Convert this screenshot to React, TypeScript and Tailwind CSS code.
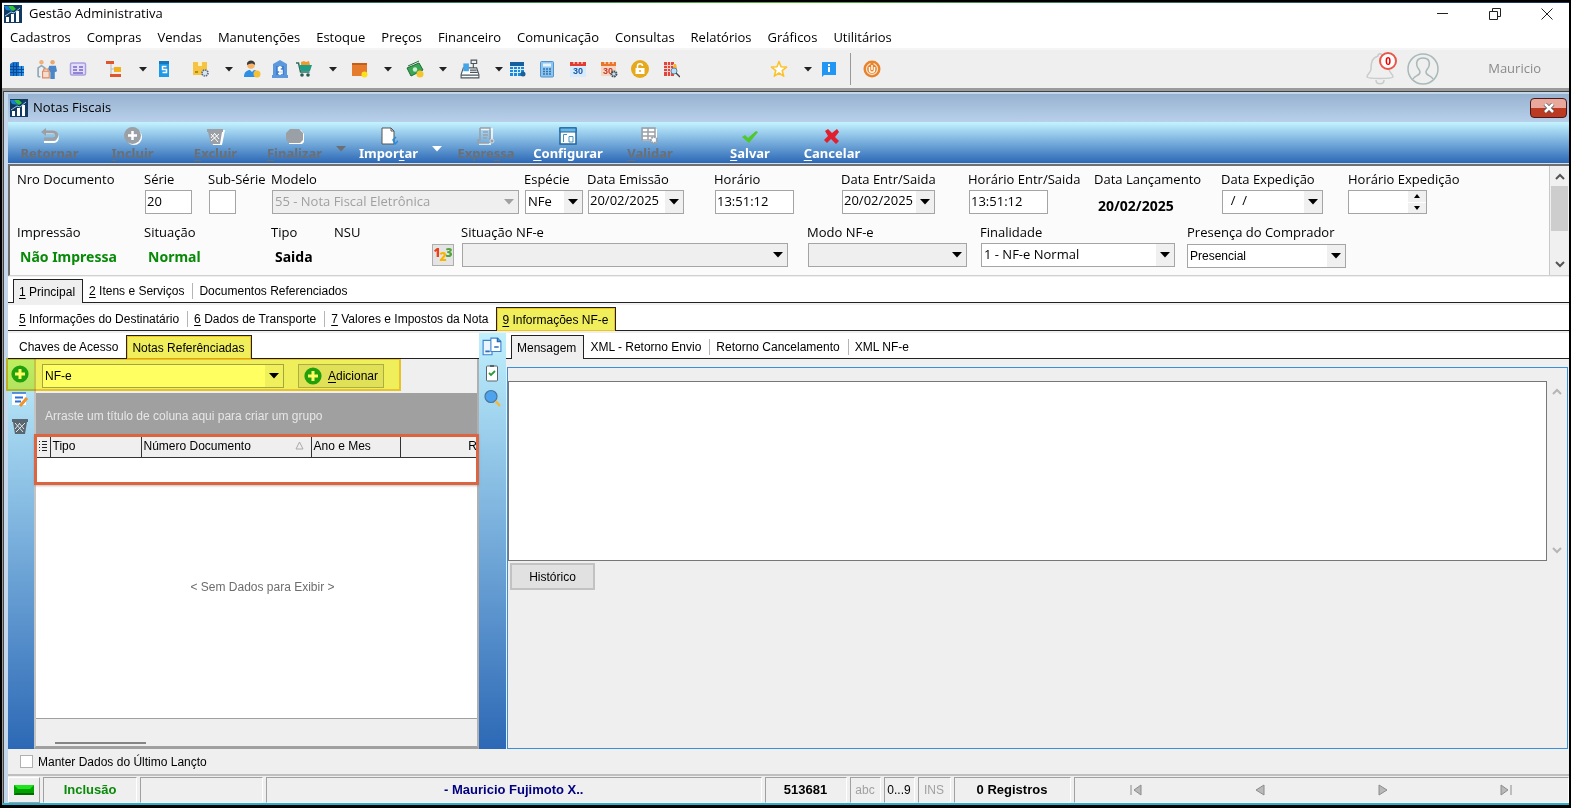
import type { ReactNode } from "react";
import { clsx } from "clsx";

const ui = "font-['Open_Sans','Noto_Sans',sans-serif] text-[13px]";
const sans = "font-['Liberation_Sans',Arial,sans-serif] text-[12px]";
const strong = "font-['Noto_Sans',sans-serif] font-bold";

function Icon({ size = 18, children, className }: { size?: number; children: ReactNode; className?: string }) {
  return (
    <svg width={size} height={size} viewBox="0 0 18 18" fill="none" className={clsx("shrink-0", className)} aria-hidden="true">
      {children}
    </svg>
  );
}

function Arrow({ className = "text-black" }: { className?: string }) {
  return (
    <svg width="10" height="6" viewBox="0 0 10 6" className={clsx("shrink-0", className)} aria-hidden="true">
      <path d="M0 0h10L5 5.5z" fill="currentColor" />
    </svg>
  );
}

function SmallArrow() {
  return (
    <svg width="8" height="5" viewBox="0 0 8 5" className="shrink-0" aria-hidden="true">
      <path d="M0 0h8L4 4.500z" fill="#222" />
    </svg>
  );
}

function AppIcon() {
  return (
    <Icon>
      <path fill="#12395f" d="M0 0h18v18H0z" />
      <path fill="#2fc23a" d="M4 1h5l3 3-3 2-3-2z" />
      <path fill="#1b7fd1" d="M0 1l4 0 2 3 3 2-7-1z" />
      <path fill="#fff" d="M2 12h3v5H2zM7 9h3v8H7zM12 6h3v11h-3z" />
      <path stroke="#9cc7e6" d="M1 11l6-4 3 1 6-5" />
    </Icon>
  );
}

function PlusIcon() {
  return (
    <Icon>
      <circle cx="9" cy="9" r="8.6" fill="#1fa01f" />
      <path stroke="#fff" strokeWidth="3" d="M9 4v10M4 9h10" />
    </Icon>
  );
}

/* ---------- main toolbar icons ---------- */

const icons: Record<string, ReactNode> = {
  Empresas: (
    <Icon>
      <path fill="#1976d2" d="M2 4l3-2h6v14H2z" />
      <path fill="#2f96ee" d="M11 6h5v10h-5z" />
      <path stroke="#0d4a94" d="M2 6.500h9M2 9.500h14M2 12.500h14M5.500 3v13M8.500 3v13M13.500 6v10" />
    </Icon>
  ),
  Pessoas: (
    <Icon size={20}>
      <circle cx="4" cy="3" r="2" fill="#f0b07a" />
      <circle cx="14" cy="3" r="2" fill="#e9a86f" />
      <path stroke="#8ba9bd" strokeWidth="1.5" d="M1 16V8l3-2 3 2v2M1 16h2" />
      <path fill="#4c86c6" d="M11 6h6l1 5-2 1v6h-4v-6l-2-3z" />
      <path stroke="#d98b65" d="M5 11h6v6H5zM6 11V9h4v2" fill="#f6dccd" />
    </Icon>
  ),
  Cartões: (
    <Icon>
      <rect x="1.5" y="3" width="15" height="12" rx="1.5" fill="#e3dff8" stroke="#a99fe0" strokeWidth="1.5" />
      <path stroke="#7568c9" strokeWidth="1.5" d="M4 7h4M4 10h4M10 7h4M10 10h4M4 13h10" />
    </Icon>
  ),
  Estrutura: (
    <Icon>
      <path fill="#e0552b" d="M1 1h8v3H1zM5 14h11v3H5z" />
      <path fill="#f2b01e" d="M9 7h7v5H9z" />
      <path stroke="#b9b9b9" d="M6 4v10M6 9h3" />
    </Icon>
  ),
  Documento: (
    <Icon>
      <path fill="#1b9ae8" d="M4 1h10v16H4z" />
      <path fill="#1477bd" d="M4 1h10v3H4z" />
      <path stroke="#fff" strokeWidth="1.5" d="M11.500 6.500h-4v3h4v3h-4" />
    </Icon>
  ),
  Produtos: (
    <Icon>
      <path fill="#f6c443" d="M1 2h14v13H1z" />
      <path fill="#fff1bf" d="M6 2h4v4H6z" />
      <path stroke="#b88711" d="M3 12h3" strokeWidth="2" />
      <circle cx="13" cy="13" r="3" fill="#dbe3ee" stroke="#526a8a" strokeWidth="1.6" strokeDasharray="1.5 .8" />
    </Icon>
  ),
  Cliente: (
    <Icon>
      <circle cx="8" cy="5" r="3.800" fill="#f7b267" />
      <path fill="#3a3a3a" d="M4 5c-1-6 9-6 8 0-2-2-5-2-8 0z" />
      <path fill="#2d8fe5" d="M1 17c0-5 3-7 6-7l2 2 2-2c3 0 4 3 4 7z" />
      <circle cx="14" cy="14" r="3.500" fill="#f6c035" />
    </Icon>
  ),
  Banco: (
    <Icon>
      <path fill="#5b98dd" d="M9 0l7 4v2H2V4zM2 6h3v9H2zM13 6h3v9h-3zM1 15h16v3H1z" />
      <path fill="#3f7fcb" d="M5 6h8v9H5z" />
      <path stroke="#fff" strokeWidth="1.500" d="M11 7.500H7.500v3H11v3H7M9 6v9" />
    </Icon>
  ),
  Vendas: (
    <Icon>
      <path stroke="#2c6e62" strokeWidth="1.500" d="M1 3h2.500l2 9h9" />
      <path fill="#1f9d85" d="M4 5h13l-2 6H6z" />
      <path fill="#f19a2b" d="M6 2l3-1 2 1 3-1 1 4H6z" />
      <circle cx="7" cy="15" r="1.800" fill="#285a54" />
      <circle cx="13" cy="15" r="1.800" fill="#285a54" />
    </Icon>
  ),
  Compras: (
    <Icon>
      <path fill="#e57c2d" d="M2 3h15v13H2z" />
      <path fill="#c75e17" d="M2 3h15v2H2z" />
      <circle cx="14.500" cy="14.500" r="3" fill="#fbe116" />
    </Icon>
  ),
  Caixa: (
    <Icon>
      <path fill="#3aa655" d="M1 8l12-5 4 7-12 6z" />
      <path stroke="#1e6e35" d="M1 8l12-5 4 7-12 6zM2 6l11-5" />
      <circle cx="9" cy="9.500" r="2.200" fill="#c9efd0" />
      <circle cx="14" cy="14" r="3.500" fill="#f4c52f" />
    </Icon>
  ),
  "Frente de caixa": (
    <Icon size={20}>
      <path fill="#fff" stroke="#4a545f" d="M3 8h12l2 6v3H1v-3z" />
      <path fill="#42a5e8" d="M3 4h5v7H3z" />
      <path stroke="#4a545f" d="M10 1h5v3h-5zM12 4v4M9 10h6M9 12h7M1 14.500h16" />
    </Icon>
  ),
  Agenda: (
    <Icon>
      <path fill="#1e88d8" d="M2 2h14v14H2z" />
      <path fill="#15609f" d="M2 2h14v4H2z" />
      <path stroke="#d6ecfb" d="M2 6.500h14M2 9.500h14M2 12.500h11M5.500 6v10M9.500 6v10M12.500 6v7" />
      <circle cx="15" cy="14" r="2.500" fill="#1e5f94" />
    </Icon>
  ),
  Calculadora: (
    <Icon>
      <rect x="2.500" y="1.500" width="13" height="15.500" rx="1" fill="#8ec4ee" stroke="#4e94cf" />
      <path fill="#e6f4ff" d="M5 3.500h8v3H5z" />
      <path stroke="#2f74ad" strokeDasharray="2 1" d="M5 9h8M5 11.500h8M5 14h8" strokeWidth="1.500" />
    </Icon>
  ),
  Calendário: (
    <Icon>
      <path fill="#d6ebfb" d="M1 3h16v14H1z" />
      <path fill="#e03c31" d="M1 2h16v4H1z" />
      <path stroke="#fff" d="M5 1v3M9 1v3M13 1v3" />
      <text x="4" y="14" fontSize="9" fontWeight="bold" fill="#1a56a8" fontFamily="Liberation Sans">30</text>
    </Icon>
  ),
  Programação: (
    <Icon>
      <path fill="#f5d7c4" d="M1 3h15v13H1z" />
      <path fill="#e8772e" d="M1 2h15v4H1z" />
      <path stroke="#fff" d="M5 1v3M9 1v3M13 1v3" />
      <text x="3" y="14" fontSize="9" fontWeight="bold" fill="#c73a2a" fontFamily="Liberation Sans">30</text>
      <circle cx="14" cy="14" r="2.500" fill="#cfdbe0" stroke="#3b5560" strokeWidth="2" strokeDasharray="1.600 .6" />
    </Icon>
  ),
  Bloquear: (
    <Icon>
      <circle cx="9" cy="9" r="9" fill="#e6a91c" />
      <path fill="#fff" d="M4.500 8h9v6h-9z" />
      <path stroke="#fff" strokeWidth="1.500" d="M6.500 8V6c0-3 5-3 5 0" />
      <path stroke="#e6a91c" strokeWidth="1.500" d="M9 10v2" />
    </Icon>
  ),
  Consulta: (
    <Icon>
      <path fill="#e0453c" d="M2 2h10v14H2z" />
      <path fill="#f2b632" d="M11 4h3l1 4v4h-4z" />
      <path stroke="#fbd0cc" d="M2 5.500h10M2 8.500h10M2 11.500h8M5.500 2v14M8.500 2v14" />
      <circle cx="12" cy="11" r="3" fill="#b9def7" stroke="#5b88a8" />
      <path stroke="#444" strokeWidth="1.500" d="M14 13l4 4" />
    </Icon>
  ),
  Favoritos: (
    <Icon>
      <path fill="#fff" stroke="#fbc22d" strokeWidth="1.600" strokeLinejoin="round" d="M9 1.500l2 5.300 5.500.3-4.300 3.500 1.500 5.600L9 13l-4.700 3.200 1.500-5.600L1.500 7.100 7 6.800z" />
    </Icon>
  ),
  Informações: (
    <Icon>
      <path fill="#2196f3" d="M2 2h14v13H4l-2 2z" />
      <path stroke="#fff" strokeWidth="2" d="M9 4v2M9 7v5" />
    </Icon>
  ),
  Sair: (
    <Icon>
      <circle cx="9" cy="9" r="8.500" fill="#e8822b" />
      <circle cx="9" cy="9" r="5.500" stroke="#fbe3cb" strokeWidth="1.300" />
      <path stroke="#e8822b" strokeWidth="3" d="M9 2v5" />
      <path stroke="#fff" strokeWidth="1.500" d="M9 5v5M6.500 7v3c0 3 5 3 5 0V7" />
    </Icon>
  ),
};

const toolbar: { name: string; box: string; menu?: string }[] = [
  { name: "Empresas", box: "w-[29px]" },
  { name: "Pessoas", box: "w-[31px]" },
  { name: "Cartões", box: "w-8" },
  { name: "Estrutura", box: "w-10", menu: "" },
  { name: "Documento", box: "w-6" },
  { name: "Produtos", box: "w-[38px] ml-[6px]", menu: "" },
  { name: "Cliente", box: "w-7" },
  { name: "Banco", box: "w-7" },
  { name: "Vendas", box: "w-5", menu: "ml-[10px]" },
  { name: "Compras", box: "w-[34px]", menu: "ml-[3px]" },
  { name: "Caixa", box: "w-9", menu: "ml-[1px]" },
  { name: "Frente de caixa", box: "w-9", menu: "ml-[2px]" },
  { name: "Agenda", box: "w-[18px]" },
  { name: "Calculadora", box: "w-[30px] ml-[6px]" },
  { name: "Calendário", box: "w-8" },
  { name: "Programação", box: "w-[30px]" },
  { name: "Bloquear", box: "w-8" },
  { name: "Consulta", box: "w-[30px]" },
  { name: "Favoritos", box: "w-[30px] ml-[78px]", menu: "ml-[5px]" },
  { name: "Informações", box: "w-6" },
];

const menus = [
  "Cadastros", "Compras", "Vendas", "Manutenções", "Estoque", "Preços",
  "Financeiro", "Comunicação", "Consultas", "Relatórios", "Gráficos", "Utilitários",
];

function ToolButton({ name, box }: { name: string; box: string }) {
  return (
    <button aria-label={name} className={clsx("flex h-6 shrink-0 items-center justify-center", box)}>
      {icons[name]}
    </button>
  );
}

function TopBar() {
  return (
    <header className={clsx(ui, "bg-white text-black")}>
      <div className="h-px bg-linear-to-r from-[#1d3f66] via-[#5fa83f] to-[#1d3060]" />
      <div className="flex h-[21px] items-center justify-between pl-[2px] pr-4">
        <div className="flex items-center gap-[7px]">
          <AppIcon />
          <h1>Gestão Administrativa</h1>
        </div>
        <div className="flex items-center gap-10">
          <button aria-label="Minimizar">
            <svg width="12" height="12"><path d="M0 5.500h11" stroke="#222" /></svg>
          </button>
          <button aria-label="Restaurar">
            <svg width="12" height="12" fill="none" stroke="#222"><path d="M.5 3.500h8v8h-8zM3.500 3.500v-3h8v8h-3" /></svg>
          </button>
          <button aria-label="Fechar">
            <svg width="12" height="12"><path d="M.5.5l11 11M11.500.5l-11 11" stroke="#222" /></svg>
          </button>
        </div>
      </div>
      <nav className="flex h-[24px] items-center gap-4 pl-2 pt-1">
        {menus.map((m) => (
          <button key={m}>{m}</button>
        ))}
      </nav>
      <div className="flex h-[40px] items-center border-t-2 border-[#f5f5f5] bg-[#efefef]">
        {toolbar.map((t) => (
          <div key={t.name} className="flex items-center">
            <ToolButton name={t.name} box={t.box} />
            {t.menu !== undefined && (
              <button aria-label={`Mais ${t.name}`} className={clsx("flex h-6 w-[18px] items-center justify-center", t.menu)}>
                <SmallArrow />
              </button>
            )}
          </div>
        ))}
        <div className="ml-[9px] mr-[9px] h-8 w-px bg-[#999]" />
        <ToolButton name="Sair" box="w-6" />
        <div className="ml-auto flex items-center gap-[11px] pr-[28px]">
          <button aria-label="Notificações" className="relative">
            <svg width="30" height="34" viewBox="0 0 30 34" fill="none" stroke="#c9cccc" strokeWidth="1.500">
              <path d="M12 4c0-3 4-3 4 0 6 2 7 6 7 13 0 4 4 5 4 8-1 2-25 2-26 0 0-3 4-4 4-8 0-7 1-11 7-13zM10 28c0 5 8 5 8 0" />
            </svg>
            <span className="absolute left-[13px] top-0 flex h-[18px] w-[18px] items-center justify-center rounded-full border-2 border-[#ea5648] bg-white text-[10px] font-bold text-[#f00000]">
              0
            </span>
          </button>
          <button aria-label="Usuário">
            <svg width="32" height="32" viewBox="0 0 32 32" fill="none" stroke="#a9b8b8" strokeWidth="1.500">
              <circle cx="16" cy="16" r="15" />
              <path d="M16 5c-6 0-7 4-6 8 1 3 3 4 3 6 0 4-5 3-7 7M16 5c6 0 7 4 6 8-1 3-3 4-3 6 0 4 5 3 7 7" />
            </svg>
          </button>
          <span className="ml-[38px] text-[#8a8a8a]">Mauricio</span>
        </div>
      </div>
    </header>
  );
}

/* ---------- note window toolbar ---------- */

const actionIcons: Record<string, ReactNode> = {
  Retornar: (
    <Icon>
      <path stroke="#fff" strokeWidth="2" d="M4 6h9c5 0 5 9 0 9H3" />
      <path stroke="#9aa0a6" strokeWidth="3" d="M4 5h8c5 0 5 7 0 7H3" />
      <path fill="#9aa0a6" d="M0 5l5-4v8z" />
    </Icon>
  ),
  Incluir: (
    <Icon>
      <circle cx="10" cy="10" r="8" fill="#fff" />
      <circle cx="8.500" cy="8.500" r="8.500" fill="#9aa0a6" />
      <path stroke="#fff" strokeWidth="2.500" d="M8.500 4v9M4 8.500h9" />
    </Icon>
  ),
  Excluir: (
    <Icon>
      <path fill="#fff" d="M2 3h16l-3 15H6z" />
      <path fill="#9aa0a6" d="M0 2h16v3h-1l-2 12H4L1 5H0z" />
      <path stroke="#fff" d="M4 7l7 8M8 7l4 5M12 7l-8 7M8 6l-4 5" />
    </Icon>
  ),
  Finalizar: (
    <Icon>
      <path fill="#fff" d="M5 3h10l3 4v8l-2 2H3z" />
      <path fill="#9aa0a6" d="M4 2h9l4 4v7l-3 3H3l-3-3V6z" />
    </Icon>
  ),
  Importar: (
    <Icon>
      <path fill="#fff" stroke="#555" d="M2 1h9l3 3v13H2z" />
      <path stroke="#555" d="M11 1v3h3" />
      <path stroke="#2a8ad8" strokeWidth="1.500" d="M16 10l-3 3 2 4 3-3" />
    </Icon>
  ),
  Expressa: (
    <Icon>
      <path stroke="#fff" strokeWidth="1.500" d="M4 2h11v12M2 17h12" />
      <path stroke="#9aa0a6" strokeWidth="1.500" d="M3 1h10v12M3 1v12H1v3h11M6 5h5M6 8h5M6 11h4" />
      <circle cx="15" cy="14" r="2" stroke="#d5dade" fill="#9aa0a6" />
    </Icon>
  ),
  Configurar: (
    <Icon>
      <path fill="#fff" stroke="#1b669e" strokeWidth="1.500" d="M1 1h16v16H1z" />
      <path fill="#6cb6e6" stroke="#1b669e" d="M1 1h16v4H1z" />
      <path stroke="#4a90bd" d="M4.500 15V7.500H8M10 15V9.500h4V15h-4" />
    </Icon>
  ),
  Validar: (
    <Icon>
      <path fill="#fff" d="M2 2h14v12H2z" />
      <path stroke="#9aa0a6" strokeWidth="1.500" d="M1 1h13v12H1zM1 5h13M1 9h13M7 1v12" />
      <circle cx="13" cy="13" r="3" fill="#fff" stroke="#9aa0a6" strokeWidth="2" strokeDasharray="2 .7" />
    </Icon>
  ),
  Salvar: (
    <Icon>
      <path fill="#4fc928" d="M1 10l3-2 3 3 8-7 2 1-9 11z" />
    </Icon>
  ),
  Cancelar: (
    <Icon>
      <path fill="#e0202f" d="M2 4l3-2 4 4 5-4 2 3-4 5 4 4-3 3-5-5-4 4-3-3 4-4z" />
    </Icon>
  ),
};

// hot is the position of the shortcut letter inside the label
const actions: { label: string; hot: number; off?: boolean; box: string; menu?: boolean }[] = [
  { label: "Retornar", hot: -1, off: true, box: "w-[83px]" },
  { label: "Incluir", hot: 0, off: true, box: "w-[83px]" },
  { label: "Excluir", hot: 0, off: true, box: "w-[83px]" },
  { label: "Finalizar", hot: 0, off: true, box: "w-[75px]", menu: true },
  { label: "Importar", hot: 5, box: "w-[79px]", menu: true },
  { label: "Expressa", hot: 5, off: true, box: "w-[82px]" },
  { label: "Configurar", hot: 0, box: "w-[82px]" },
  { label: "Validar", hot: 0, off: true, box: "w-[82px]" },
  { label: "Salvar", hot: 0, box: "ml-[18px] w-[82px]" },
  { label: "Cancelar", hot: 0, box: "w-[82px]" },
];

function HotLabel({ text, hot }: { text: string; hot: number }) {
  if (hot < 0) return <span>{text}</span>;
  return (
    <span className="whitespace-pre">
      {text.slice(0, hot)}
      <u className="underline-offset-2">{text[hot]}</u>
      {text.slice(hot + 1)}
    </span>
  );
}

function ActionBar() {
  return (
    <div className="flex h-[41px] items-stretch bg-linear-to-b from-[#c5f3ff] to-[#2c68b5]">
      {actions.map((a) => (
        <div key={a.label} className="flex">
          <button
            disabled={a.off}
            className={clsx(strong, "flex flex-col items-center pt-[5px] text-[13px] leading-[17px]", a.box, a.off ? "text-[#6b7075]" : "text-white")}
          >
            {actionIcons[a.label]}
            <HotLabel text={a.label} hot={a.hot} />
          </button>
          {a.menu && (
            <button aria-label={`Opções de ${a.label}`} disabled={a.off} className="flex w-[17px] items-center justify-center pt-3">
              <Arrow className={a.off ? "text-[#6b7075]" : "text-white"} />
            </button>
          )}
        </div>
      ))}
    </div>
  );
}

/* ---------- header form ---------- */

const box = "h-6 border border-[#a5a5a5] bg-white";

function Field({ label, id, cell, children }: { label: string; id?: string; cell: string; children?: ReactNode }) {
  return (
    <div className={clsx("flex shrink-0 flex-col gap-[3px] whitespace-nowrap", cell)}>
      {id ? (
        <label htmlFor={id} className="h-4 leading-4">{label}</label>
      ) : (
        <span className="h-4 leading-4">{label}</span>
      )}
      {children}
    </div>
  );
}

function TextBox({ id, value = "", width }: { id: string; value?: string; width: string }) {
  return <input id={id} defaultValue={value} className={clsx(box, "ml-px pb-[2px] pl-[1px]", width)} />;
}

function Select({ id, label, value = "", width, tone, className }: { id: string; label?: string; value?: string; width: string; tone?: "off" | "empty"; className?: string }) {
  return (
    <div className={clsx("relative", width)}>
      <select
        id={id}
        aria-label={label}
        disabled={tone === "off"}
        className={clsx(
          "h-6 w-full appearance-none border border-[#a5a5a5] pl-[2px] pr-5",
          tone ? "bg-[#efefef]" : "bg-white",
          tone === "off" && "text-[#a0a0a0] opacity-100",
          className,
        )}
      >
        <option>{value}</option>
      </select>
      <span className={clsx("pointer-events-none absolute inset-y-px right-px flex w-[18px] items-center justify-center", !tone && "bg-[#f0f0f0]")}>
        <Arrow className={tone === "off" ? "text-[#a0a0a0]" : "text-black"} />
      </span>
    </div>
  );
}

function DateBox({ id, value, width }: { id: string; value: string; width: string }) {
  return (
    <div className={clsx(box, "ml-px flex", width)}>
      <input id={id} defaultValue={value} className="w-0 flex-1 pb-[2px] pl-[1px]" />
      <button aria-label="Abrir calendário" className="flex w-[18px] shrink-0 items-center justify-center bg-[#f0f0f0]">
        <Arrow />
      </button>
    </div>
  );
}

function HeaderForm() {
  return (
    <section className="flex h-[112px] border-2 border-b border-r-0 border-[#6f6f6f] border-b-[#d0d0d0] bg-[#fbfbfb]">
      <div className="min-w-0 flex-1 overflow-hidden pl-[7px] pt-[5px]">
        <div className="flex h-[43px]">
          <Field label="Nro Documento" cell="w-[127px]" />
          <Field label="Série" id="serie" cell="w-16">
            <TextBox id="serie" value="20" width="w-[47px]" />
          </Field>
          <Field label="Sub-Série" id="subserie" cell="w-[63px]">
            <TextBox id="subserie" width="w-[27px]" />
          </Field>
          <Field label="Modelo" id="modelo" cell="w-[253px]">
            <Select id="modelo" value="55 - Nota Fiscal Eletrônica" width="ml-px w-[247px]" tone="off" />
          </Field>
          <Field label="Espécie" id="especie" cell="w-[63px]">
            <Select id="especie" value="NFe" width="ml-px w-[58px]" />
          </Field>
          <Field label="Data Emissão" id="emissao" cell="w-[127px]">
            <DateBox id="emissao" value="20/02/2025" width="w-[96px]" />
          </Field>
          <Field label="Horário" id="horario" cell="w-[127px]">
            <TextBox id="horario" value="13:51:12" width="w-[79px]" />
          </Field>
          <Field label="Data Entr/Saida" id="entrada" cell="w-[127px]">
            <DateBox id="entrada" value="20/02/2025" width="w-[93px]" />
          </Field>
          <Field label="Horário Entr/Saida" id="hentrada" cell="w-[126px]">
            <TextBox id="hentrada" value="13:51:12" width="w-[79px]" />
          </Field>
          <Field label="Data Lançamento" cell="w-[127px]">
            <span className={clsx(strong, "pl-1 pt-1 text-[14px] leading-6")}>20/02/2025</span>
          </Field>
          <Field label="Data Expedição" id="expedicao" cell="w-[127px]">
            <DateBox id="expedicao" value="  /  /" width="w-[101px]" />
          </Field>
          <Field label="Horário Expedição" id="hexpedicao" cell="w-[127px]">
            <div className={clsx(box, "flex w-[79px]")}>
              <input id="hexpedicao" className="w-0 flex-1 px-1" />
              <div className="flex w-[18px] flex-col bg-[#f0f0f0]">
                <button aria-label="Aumentar" className="flex flex-1 items-center justify-center">
                  <svg width="6" height="4"><path d="M0 4h6L3 0z" /></svg>
                </button>
                <button aria-label="Diminuir" className="flex flex-1 items-center justify-center border-t border-white">
                  <svg width="6" height="4"><path d="M0 0h6L3 4z" /></svg>
                </button>
              </div>
            </div>
          </Field>
        </div>
        <div className="mt-[10px] flex h-[45px]">
          <Field label="Impressão" cell="w-[127px]">
            <span className={clsx(strong, "ml-[3px] w-[98px] overflow-hidden text-[14px] leading-7 text-[#078a07]")}>Não Impressa</span>
          </Field>
          <Field label="Situação" cell="w-[127px]">
            <span className={clsx(strong, "pl-1 text-[14px] leading-7 text-[#078a07]")}>Normal</span>
          </Field>
          <Field label="Tipo" cell="w-[63px]">
            <span className={clsx(strong, "pl-1 text-[14px] leading-7")}>Saida</span>
          </Field>
          <Field label="NSU" cell="w-[127px]">
            <button aria-label="Numerar NSU" className="ml-[98px] mt-px flex h-[22px] w-[22px] items-center justify-center border border-[#adadad] bg-[#e4e4e4] text-[12px] font-extrabold leading-none">
              <span className="pb-1 text-[#ee3f1a]">1</span>
              <span className="-mx-px pt-1 text-[#f7b500]">2</span>
              <span className="pb-1 text-[#54a33b]">3</span>
            </button>
          </Field>
          <Field label="Situação NF-e" id="situacaonfe" cell="w-[346px]">
            <Select id="situacaonfe" width="ml-px w-[326px]" tone="empty" />
          </Field>
          <Field label="Modo NF-e" id="modonfe" cell="w-[173px]">
            <Select id="modonfe" width="ml-px w-[159px]" tone="empty" />
          </Field>
          <Field label="Finalidade" id="finalidade" cell="w-[207px]">
            <Select id="finalidade" value="1 - NF-e Normal" width="ml-px w-[194px]" />
          </Field>
          <Field label="Presença do Comprador" id="presenca" cell="w-[160px]">
            <Select id="presenca" value="Presencial" width="mt-px w-[159px]" className={sans} />
          </Field>
        </div>
      </div>
      <div className="flex w-[20px] shrink-0 flex-col items-center justify-between border-l border-[#c8c8c8] bg-[#f0f0f0] py-[7px]">
        <svg width="10" height="7" fill="none" stroke="#555" strokeWidth="2"><path d="M1 6l4-4 4 4" /></svg>
        <div className="mb-auto mt-[6px] h-[45px] w-[17px] bg-[#cdcdcd]" />
        <svg width="10" height="7" fill="none" stroke="#555" strokeWidth="2"><path d="M1 1l4 4 4-4" /></svg>
      </div>
    </section>
  );
}

/* ---------- tabs ---------- */

type Tab = { text: string; hot?: boolean };

function Tabs({ items, active, marked, pad = "pl-[5px]" }: { items: Tab[]; active: number; marked?: boolean; pad?: string }) {
  return (
    <div role="tablist" className={clsx(sans, "flex h-[26px] shrink-0 items-end border-b border-[#222] bg-white", pad)}>
      {items.map((t, i) => (
        <button
          key={t.text}
          role="tab"
          aria-selected={i === active}
          className={clsx(
            "-mb-px flex h-6 items-center whitespace-nowrap",
            i === active && "border border-b-0 border-[#222] pl-[5px] pr-[7px]",
            i === active && (marked ? "border-[#6b5a00] bg-[#f1ee5c] shadow-[inset_0_0_0_1px_#f0c419]" : "bg-[#efefef]"),
            i !== active && "pl-[6px]",
          )}
        >
          <HotLabel text={t.text} hot={t.hot ? 0 : -1} />
          {i !== active && i + 1 !== active && i < items.length - 1 && <span className="ml-[8px] h-4 w-px bg-[#b5b5b5]" />}
          {i + 1 === active && <span className="w-[8px]" />}
        </button>
      ))}
    </div>
  );
}

/* ---------- referenced notes ---------- */

function NotesPanel() {
  return (
    <div className="flex w-[471px] shrink-0 flex-col">
      <Tabs marked active={1} items={[{ text: "Chaves de Acesso" }, { text: "Notas Referênciadas" }]} />
      <div className="relative flex flex-1">
        <div className="flex w-[26px] shrink-0 flex-col items-center gap-2 bg-linear-to-b from-[#bfeefb] to-[#2c68b5] pr-[2px] pt-[6px]">
          <button aria-label="Incluir nota"><PlusIcon /></button>
          <button aria-label="Editar nota">
            <Icon>
              <path fill="#fff" d="M1 2h14v12H1z" />
              <path stroke="#2c6fd6" strokeWidth="1.500" d="M1 2h14" />
              <path stroke="#2c6fd6" strokeWidth="2" d="M4 6.500h8M4 10.500h6" />
              <path stroke="#f0932b" strokeWidth="3" d="M16 7l-7 8" />
            </Icon>
          </button>
          <button aria-label="Excluir nota">
            <Icon>
              <path fill="#5b6770" d="M1 2h16v3h-1l-2 12H4L2 5H1z" />
              <path stroke="#dfe7ec" d="M4 6l8 9M8 6l5 6M14 6l-9 9M9 6l-5 6" />
            </Icon>
          </button>
        </div>
        <div className="flex min-w-0 flex-1 flex-col border-b-[3px] border-l-2 border-r-2 border-[#a0a0a0] border-l-[#c4c4c4] border-r-[#b0b0b0]">
          <div className={clsx(sans, "flex h-[34px] items-center gap-[14px] bg-[#efefef] pl-[6px]")}>
            <Select id="tiponota" label="Tipo de nota" value="NF-e" width="w-[242px]" />
            <button className="flex h-6 w-[86px] items-center justify-center gap-[6px] border border-[#adadad] bg-[#e1e1e1]">
              <PlusIcon />
              <HotLabel text="Adicionar" hot={0} />
            </button>
          </div>
          <div className={clsx(sans, "flex h-[42px] items-center bg-[#a0a0a0] pl-[9px] pt-1 text-[#e6e6e6]")}>
            Arraste um título de coluna aqui para criar um grupo
          </div>
          <div className="relative">
            <table className={clsx(sans, "w-full table-fixed border-collapse")}>
              <colgroup>
                <col className="w-[14px]" />
                <col className="w-[91px]" />
                <col className="w-[170px]" />
                <col className="w-[89px]" />
                <col />
              </colgroup>
              <thead>
                <tr className="h-[22px] border-b border-[#333] bg-[#efefef] text-left *:border-r *:border-[#333] *:font-normal *:last:border-r-0">
                  <th>
                    <svg width="10" height="12" className="mx-auto" stroke="#222"><path d="M1 1.500h1M4 1.500h5M1 4.500h1M4 4.500h5M1 7.500h1M4 7.500h5M1 10.500h1M4 10.500h5" /></svg>
                  </th>
                  <th className="pl-[2px]">Tipo</th>
                  <th className="pl-[2px]">
                    <span className="flex items-center justify-between pr-[7px]">
                      Número Documento
                      <svg width="9" height="9" fill="none" stroke="#aaa"><path d="M1 8L4.500 1 8 8z" /></svg>
                    </span>
                  </th>
                  <th className="pl-[2px]">Ano e Mes</th>
                  <th className="text-right">R</th>
                </tr>
              </thead>
              <tbody>
                <tr className="h-[27px] bg-white">
                  <td colSpan={5} />
                </tr>
              </tbody>
            </table>
            <div className="pointer-events-none absolute -inset-x-[2px] -inset-y-px border-[3px] border-[#dc6440] shadow-[0_1px_2px_#8888]" />
          </div>
          <div className={clsx(sans, "flex flex-1 items-center justify-center bg-white pb-7 pl-3 text-[#6d6d6d]")}>
            &lt; Sem Dados para Exibir &gt;
          </div>
          <div className="flex h-[28px] flex-col justify-end border-t border-[#a0a0a0] bg-[#efefef] pb-[2px]">
            <div className="ml-[19px] h-[2px] w-[91px] bg-[#858585]" />
          </div>
        </div>
        <div className="pointer-events-none absolute -left-[2px] -top-px h-[33px] w-[395px] border-2 border-[#f7cf2a] bg-[#ffff62] mix-blend-multiply" />
      </div>
    </div>
  );
}

function MessagePanel() {
  return (
    <div className="flex min-w-0 flex-1 flex-col">
      <Tabs
        active={0}
        pad="pl-[5px]"
        items={[{ text: "Mensagem" }, { text: "XML - Retorno Envio" }, { text: "Retorno Cancelamento" }, { text: "XML NF-e" }]}
      />
      <div className="ml-px mr-px mt-2 flex flex-1 flex-col border border-[#3a8fd6] pt-[13px]">
        <div className="flex">
          <textarea aria-label="Mensagem" className="h-[180px] min-w-0 flex-1 resize-none border border-[#777] bg-white" />
          <div className="flex w-[20px] flex-col items-center justify-between py-[7px]">
            <svg width="10" height="7" fill="none" stroke="#b5b5b5" strokeWidth="2"><path d="M1 6l4-4 4 4" /></svg>
            <svg width="10" height="7" fill="none" stroke="#b5b5b5" strokeWidth="2"><path d="M1 1l4 4 4-4" /></svg>
          </div>
        </div>
        <button className={clsx(sans, "ml-[2px] mt-[2px] h-[27px] w-[85px] border-2 border-[#c2c2c2] bg-[#e1e1e1]")}>Histórico</button>
      </div>
    </div>
  );
}

function SideStrip() {
  return (
    <div className="flex w-[27px] shrink-0 flex-col items-center gap-[7px] bg-linear-to-b from-[#c0f0fc] to-[#2c68b5] pr-[2px] pt-[4px]">
      <button aria-label="Copiar">
        <Icon size={20}>
          <path fill="#eaf5ff" stroke="#3d82cf" d="M1 3h8v13H1z" />
          <path fill="#fff" stroke="#3d82cf" d="M8 1h6l3 3v9H8z" />
          <path stroke="#2b6cb8" strokeWidth="1.500" d="M3 13h4M11 9h4M14 1v3h3" />
        </Icon>
      </button>
      <button aria-label="Validar">
        <Icon>
          <rect x="3.500" y="2" width="11" height="15" rx="1" fill="#fff" stroke="#55646e" />
          <path fill="#55646e" d="M7 1h4v2H7z" />
          <path stroke="#2a9c3c" strokeWidth="1.800" d="M6 9l2 2 4-4" />
        </Icon>
      </button>
      <button aria-label="Pesquisar">
        <Icon>
          <circle cx="8" cy="7.500" r="6" fill="#4da3ee" stroke="#49759c" strokeWidth="1.200" />
          <path stroke="#f0b93a" strokeWidth="2.500" d="M12.500 12l4.500 5" />
        </Icon>
      </button>
    </div>
  );
}

/* ---------- status bar ---------- */

function StatusCell({ children, className }: { children?: ReactNode; className?: string }) {
  return (
    <div className={clsx("flex h-[26px] items-center justify-center whitespace-nowrap border border-[#a0a0a0] border-b-white border-r-white", className)}>
      {children}
    </div>
  );
}

const records = [
  { label: "Primeiro", d: "M2 1v10M12 1L5 6l7 5z" },
  { label: "Anterior", d: "M11 1L3 6l8 5z" },
  { label: "Próximo", d: "M3 1l8 5-8 5z" },
  { label: "Último", d: "M12 1v10M2 1l7 5-7 5z" },
];

function StatusBar() {
  return (
    <footer className={clsx(sans, "flex h-[29px] items-center gap-[3px] border-t-2 border-[#bfbfbf] bg-[#efefef]")}>
      <div className="flex h-[26px] w-8 items-center justify-center border border-white border-b-[#a0a0a0] border-r-[#a0a0a0]">
        <svg width="20" height="10"><path fill="#00a000" d="M0 0h20v10H0z" /><path fill="#1ee61e" d="M0 0h20l-4 4H4z" /><path fill="#006b00" d="M0 10h20V8H2z" /></svg>
      </div>
      <StatusCell className="w-[94px] text-[13px] font-bold text-[#0a8a0a]">Inclusão</StatusCell>
      <StatusCell className="w-[123px]" />
      <StatusCell className="flex-1 text-[13px] font-bold text-[#000080]">- Mauricio Fujimoto X..</StatusCell>
      <StatusCell className="w-[82px] text-[13px] font-bold">513681</StatusCell>
      <StatusCell className="w-[31px] text-[#a0a0a0]">abc</StatusCell>
      <StatusCell className="w-[31px]">0...9</StatusCell>
      <StatusCell className="w-[33px] text-[#a0a0a0]">INS</StatusCell>
      <StatusCell className="w-[117px] text-[13px] font-bold">0 Registros</StatusCell>
      <StatusCell className="flex-1">
        {records.map((r) => (
          <button key={r.label} aria-label={r.label} className="flex flex-1 justify-center">
            <svg width="14" height="12" fill="#b9b9b9" stroke="#8c8c8c"><path d={r.d} /></svg>
          </button>
        ))}
      </StatusCell>
    </footer>
  );
}

export default function App() {
  return (
    <div className={clsx(ui, "flex min-h-screen flex-col border-2 border-b-[3px] border-black bg-[#efefef] text-black")}>
      <TopBar />
      <main className="flex flex-1 flex-col border-b-2 border-l border-t-[3px] border-[#9a9a9a] border-b-[#2ab0cf]">
        <div className="flex flex-1 flex-col border-l border-t border-[#444]">
          <div className="flex flex-1 flex-col border-l-4 border-t-2 border-[#c3d6ea]">
            <div className="flex h-[28px] items-center justify-between bg-linear-to-b from-[#97b2d0] to-[#b8d0ea] pl-[2px] pr-[2px]">
              <div className="flex items-center gap-[5px]">
                <AppIcon />
                <h2>Notas Fiscais</h2>
              </div>
              <button aria-label="Fechar janela" className="flex h-5 w-[37px] items-center justify-center rounded-sm border border-[#4e1616] bg-linear-to-b from-[#e8a89c] from-50% to-[#bb3b22] to-50%">
                <svg width="12" height="10" viewBox="0 0 12 10" fill="none">
                  <path d="M2 1l8 8M10 1L2 9" stroke="#555" strokeWidth="4" />
                  <path d="M2 1l8 8M10 1L2 9" stroke="#fff" strokeWidth="2.500" />
                </svg>
              </button>
            </div>
            <ActionBar />
            <div className="h-px bg-[#d5dfee]" />
            <HeaderForm />
            <div className="mt-px">
              <Tabs active={0} items={[{ text: "1 Principal", hot: true }, { text: "2 Itens e Serviços", hot: true }, { text: "Documentos Referenciados" }]} />
            </div>
            <div className="mt-[2px]">
              <Tabs
                marked
                active={3}
                items={[
                  { text: "5 Informações do Destinatário", hot: true },
                  { text: "6 Dados de Transporte", hot: true },
                  { text: "7 Valores e Impostos da Nota", hot: true },
                  { text: "9 Informações NF-e", hot: true },
                ]}
              />
            </div>
            <div className="mt-[2px] flex flex-1">
              <NotesPanel />
              <SideStrip />
              <MessagePanel />
            </div>
            <div className={clsx(sans, "flex h-[25px] items-center gap-[5px] pl-3")}>
              <input id="manter" type="checkbox" className="h-[13px] w-[13px] appearance-none border border-[#b0b0b0] bg-white checked:bg-[#2c68b5]" />
              <label htmlFor="manter">Manter Dados do Último Lançto</label>
            </div>
            <StatusBar />
          </div>
        </div>
      </main>
    </div>
  );
}
